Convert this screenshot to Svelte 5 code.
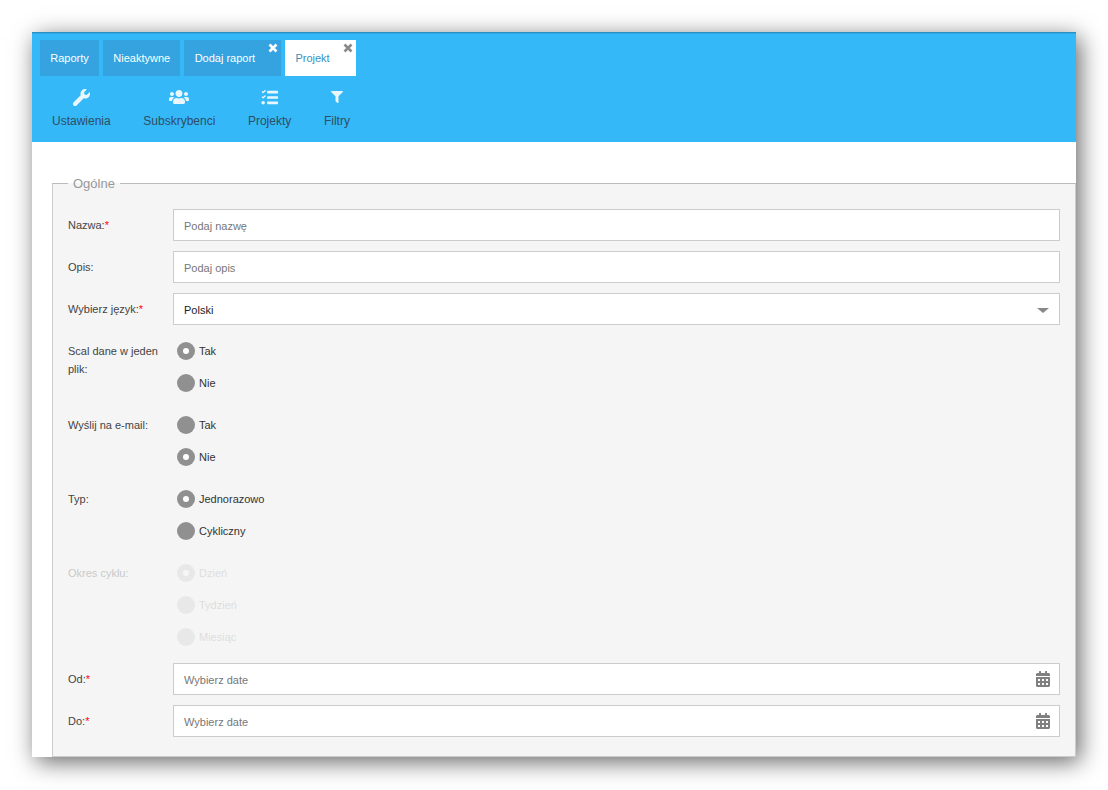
<script>
  const topTabs = [
    { label: 'Raporty' },
    { label: 'Nieaktywne' },
    { label: 'Dodaj raport', closable: true },
    { label: 'Projekt', closable: true, active: true }
  ]

  const groups = [
    { label: 'Scal dane w jeden plik:', name: 'scal', options: ['Tak', 'Nie'], checked: 'Tak' },
    { label: 'Wyślij na e-mail:', name: 'mail', options: ['Tak', 'Nie'], checked: 'Nie' },
    { label: 'Typ:', name: 'typ', options: ['Jednorazowo', 'Cykliczny'], checked: 'Jednorazowo' },
    { label: 'Okres cyklu:', name: 'okres', options: ['Dzień', 'Tydzień', 'Miesiąc'], checked: 'Dzień', disabled: true }
  ]
</script>

<div class="page">
  <div class="panel">
    <header class="head">
      <div class="tabs">
        {#each topTabs as t}
          <div class="tab" class:active={t.active} class:closable={t.closable}>
            {t.label}
            {#if t.closable}
              <svg class="close" viewBox="0 0 10 10" width="10" height="10">
                <path d="M1.5 1.5 L8.5 8.5 M8.5 1.5 L1.5 8.5" stroke="currentColor" stroke-width="2.6" />
              </svg>
            {/if}
          </div>
        {/each}
      </div>
      <nav class="tools">
        <div class="tool">
          <span class="ico">
            <svg viewBox="0 0 512 512" width="17" height="17">
              <path fill="currentColor" d="M507.7 109.1c-2.2-9-13.5-12.1-20.1-5.5l-74.4 74.4-67.9-11.3-11.3-67.9 74.4-74.4c6.600-6.600 3.400-17.900-5.700-20.200-47.400-11.700-99.600.9-136.600 37.900-39.600 39.600-50.500 97.100-34.100 147.200L18.700 402.800c-25 25-25 65.500 0 90.500 25 25 65.500 25 90.500 0l213.200-213.200c50.100 16.700 107.500 5.700 147.400-34.200 37.100-37.100 49.700-89.300 37.900-136.800z" />
            </svg>
          </span>
          <span>Ustawienia</span>
        </div>
        <div class="tool">
          <span class="ico">
            <svg viewBox="0 0 640 512" width="20" height="16">
              <path fill="currentColor" d="M96 224c35 0 64-29 64-64s-29-64-64-64-64 29-64 64 29 64 64 64zm448 0c35 0 64-29 64-64s-29-64-64-64-64 29-64 64 29 64 64 64zm32 32h-64c-18 0-34 7-45 19 40 22 69 62 75 109h66c18 0 32-14 32-32v-32c0-35-29-64-64-64zm-256 0c62 0 112-50 112-112S382 32 320 32 208 82 208 144s50 112 112 112zm77 32h-8c-21 10-44 16-69 16s-48-6-69-16h-8c-64 0-115 52-115 115v29c0 26 21 48 48 48h288c26 0 48-22 48-48v-29c0-63-52-115-115-115zm-224-13c-12-12-28-19-45-19H64c-35 0-64 29-64 64v32c0 18 14 32 32 32h66c6-47 35-87 75-109z" />
            </svg>
          </span>
          <span>Subskrybenci</span>
        </div>
        <div class="tool">
          <span class="ico">
            <svg viewBox="0 0 512 512" width="17" height="17">
              <path fill="currentColor" d="M145 45l-16-16c-4-4-9-4-12 0L65 78 51 64c-4-4-9-4-12 0L22 80c-4 4-4 9 0 12l37 37c4 4 9 4 12 0l16-16 58-56c3-3 3-9 0-12zm0 159l-16-16c-4-4-9-4-12 0l-52 49-14-14c-4-4-9-4-12 0l-17 16c-4 4-4 9 0 12l37 37c4 4 9 4 12 0l16-16 58-56c3-3 3-9 0-12zM64 360c-28 0-52 23-52 52s24 52 52 52 52-23 52-52-23-52-52-52zm432 16H200c-9 0-16 7-16 16v48c0 9 7 16 16 16h296c9 0 16-7 16-16v-48c0-9-7-16-16-16zm0-320H200c-9 0-16 7-16 16v48c0 9 7 16 16 16h296c9 0 16-7 16-16V72c0-9-7-16-16-16zm0 160H200c-9 0-16 7-16 16v48c0 9 7 16 16 16h296c9 0 16-7 16-16v-48c0-9-7-16-16-16z" />
            </svg>
          </span>
          <span>Projekty</span>
        </div>
        <div class="tool">
          <span class="ico">
            <svg viewBox="0 0 512 512" width="12" height="12">
              <path fill="currentColor" d="M487 0H25C3 0-9 27 7 43l185 184v205c0 8 4 15 10 20l80 56c16 11 38 0 38-20V227L505 43c16-16 4-43-18-43z" />
            </svg>
          </span>
          <span>Filtry</span>
        </div>
      </nav>
    </header>

    <div class="content">
      <fieldset class="box">
        <legend>Ogólne</legend>

        <div class="row">
          <span class="lab">Nazwa:<i>*</i></span>
          <div class="field"><input type="text" placeholder="Podaj nazwę" /></div>
        </div>
        <div class="row">
          <span class="lab">Opis:</span>
          <div class="field"><input type="text" placeholder="Podaj opis" /></div>
        </div>
        <div class="row">
          <span class="lab">Wybierz język:<i>*</i></span>
          <div class="field select">
            <span>Polski</span>
            <span class="caret"></span>
          </div>
        </div>

        {#each groups as g}
          <div class="row" class:off={g.disabled}>
            <span class="lab multi">{g.label}</span>
            <div class="radios">
              {#each g.options as o}
                <div class="radio">
                  <span class="dot" class:on={o === g.checked}></span>
                  <span>{o}</span>
                </div>
              {/each}
            </div>
          </div>
        {/each}

        {#each ['Od:', 'Do:'] as d}
          <div class="row">
            <span class="lab">{d}<i>*</i></span>
            <div class="field date">
              <input type="text" placeholder="Wybierz date" />
              <svg class="cal" viewBox="0 0 448 512" width="14" height="16">
                <path fill="currentColor" d="M0 464c0 26 21 48 48 48h352c26 0 48-22 48-48V192H0v272zm320-196c0-7 5-12 12-12h40c7 0 12 5 12 12v40c0 7-5 12-12 12h-40c-7 0-12-5-12-12v-40zm0 128c0-7 5-12 12-12h40c7 0 12 5 12 12v40c0 7-5 12-12 12h-40c-7 0-12-5-12-12v-40zM192 268c0-7 5-12 12-12h40c7 0 12 5 12 12v40c0 7-5 12-12 12h-40c-7 0-12-5-12-12v-40zm0 128c0-7 5-12 12-12h40c7 0 12 5 12 12v40c0 7-5 12-12 12h-40c-7 0-12-5-12-12v-40zM64 268c0-7 5-12 12-12h40c7 0 12 5 12 12v40c0 7-5 12-12 12H76c-7 0-12-5-12-12v-40zm0 128c0-7 5-12 12-12h40c7 0 12 5 12 12v40c0 7-5 12-12 12H76c-7 0-12-5-12-12v-40zM400 64h-48V16c0-9-7-16-16-16h-32c-9 0-16 7-16 16v48H160V16c0-9-7-16-16-16h-32c-9 0-16 7-16 16v48H48C21 64 0 86 0 112v48h448v-48c0-26-21-48-48-48z" />
              </svg>
            </div>
          </div>
        {/each}
      </fieldset>
    </div>
  </div>
</div>

<style>
  :global(body) { margin: 0; background: #fff; font-family: "Liberation Sans", Arial, sans-serif; }

  .page { height: 790px; padding: 32px 32px 33px; box-sizing: border-box; overflow: hidden; }

  .panel {
    height: 725px; overflow: hidden; background: #fff;
    box-shadow: 4px 5px 22px rgba(0,0,0,0.6);
    border-top: 1px solid #2b8fc4;
    box-sizing: border-box;
  }

  .head {
    background: #35b8f8; height: 109px; box-sizing: border-box; padding: 7px 8px 0;
    box-shadow: inset 0 1px 0 #31a8e4;
  }

  .tabs { display: flex; gap: 4px; }
  .tab {
    position: relative; height: 36px; line-height: 36px; padding: 0 10.25px;
    font-size: 11px; color: #fff; background: #34a3df;
  }
  .tab.closable { padding-right: 26px; }
  .tab.active { background: #fff; color: #3a8fc0; }

  .close { position: absolute; top: 3px; right: 3px; color: #fff; }
  .tab.active .close { color: #8a8a8a; }

  .tools { display: flex; padding: 12px 0 0 12px; gap: 32.6px; }
  .tool {
    display: flex; flex-direction: column; align-items: center; gap: 8px;
    font-size: 12px; color: #2d4e63;
  }
  .ico { height: 18px; display: flex; align-items: center; color: #e8f6fe; }

  .content { padding-top: 34px; }

  .box {
    margin: 0 0 0 20px; padding: 18px 15px 9px 15px; min-width: 0;
    border: 1px solid #ccc; border-top-color: #bbb;
    background: #f5f5f5; display: block;
  }
  legend { padding: 0 5px; font-size: 13px; color: #999; }

  .row { display: flex; margin-bottom: 10px; }

  .lab {
    width: 105px; flex: none; font-size: 11px; line-height: 18px; color: #444; padding-top: 7px; box-sizing: border-box;
  }
  .lab.multi { padding-right: 15px; }
  .lab i { color: #f01; font-style: normal; }

  .field { flex: 1; position: relative; height: 32px; }
  input {
    width: 100%; height: 32px; box-sizing: border-box; border: 1px solid #ccc; background: #fff;
    padding: 2px 10px 0; font: 11px "Liberation Sans", Arial, sans-serif; color: #333; outline: none; border-radius: 0;
  }
  input::placeholder { color: #777; opacity: 1; }

  .select {
    box-sizing: border-box; border: 1px solid #ccc; background: #fff; display: flex; align-items: center;
    justify-content: space-between; padding: 2px 10px 0; font-size: 11px; color: #222;
  }
  .caret { width: 0; height: 0; border: 6px solid transparent; border-top: 5px solid #888; border-bottom: 0; }

  .cal { position: absolute; right: 10px; top: 8px; color: #808080; }

  .radios { display: flex; flex-direction: column; }
  .radio { display: flex; align-items: center; height: 32px; gap: 4px; padding-left: 4px; font-size: 11px; color: #333; }
  .dot { width: 18px; height: 18px; border-radius: 50%; background: #909090; display: flex; align-items: center; justify-content: center; }
  .dot.on::after { content: ''; width: 6px; height: 6px; border-radius: 50%; background: #fff; }

  .off .lab { opacity: 0.25; }
  .off .radios { opacity: 0.12; }
</style>
